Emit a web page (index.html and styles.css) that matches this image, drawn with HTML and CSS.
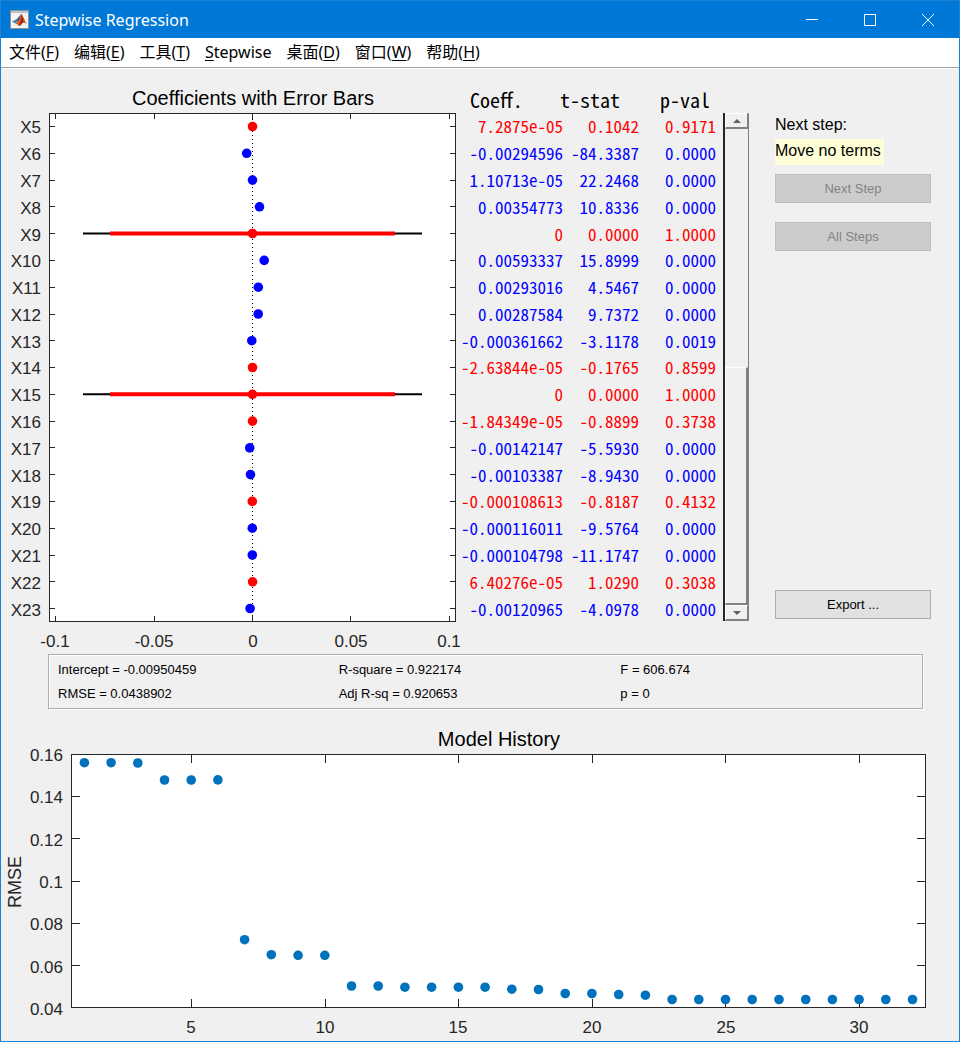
FILE: index.html
```html
<!DOCTYPE html>
<html lang="zh-CN">
<head>
<meta charset="utf-8">
<meta name="viewport" content="width=device-width, initial-scale=1">
<title>Stepwise Regression</title>
<link rel="stylesheet" href="styles.css">
</head>
<body>
<div class="window">
  <header class="titlebar">
    <svg class="logo" viewBox="0 0 19 19" aria-hidden="true">
      <rect x="0.5" y="0.5" width="18" height="18" fill="#f4f4f4" stroke="#8d9296"/>
      <rect x="1" y="1" width="17" height="2" fill="#b9c4cc"/>
      <path d="M2 11.5 6 9.5 8 11 5.500 13.500Z" fill="#3f7fb8"/>
      <path d="M6 9.500C8 9 9 6 11 4L9.500 10.500 8 11.500Z" fill="#35557f"/>
      <path d="M11 4C10.500 7 9 11 5.500 13.500 7.500 13.500 8 16 9 16 11 16 12 12.500 13.500 12.500 15 12.500 16 13.500 17 14.500 15 11 12.500 4 11 4Z" fill="#d9541e"/>
      <path d="M11 4C12 7 11 12 9 16 11 15.500 12 12.500 13.500 12.500 13 9 12 5 11 4Z" fill="#8f2415"/>
      <path d="M10.500 6C10.500 9 9.500 12 7.500 14 9 13 10.500 10 10.500 6Z" fill="#f3a43b"/>
    </svg>
    <h1 class="title">Stepwise Regression</h1>
    <div class="controls">
      <button class="control" type="button" aria-label="Minimize"><svg viewBox="0 0 12 12"><path d="M0 5.500h12"/></svg></button>
      <button class="control" type="button" aria-label="Maximize"><svg viewBox="0 0 12 12"><path d="M0.500 0.500h11v11h-11z"/></svg></button>
      <button class="control" type="button" aria-label="Close"><svg viewBox="0 0 12 12"><path d="M0 0 12 12M12 0 0 12"/></svg></button>
    </div>
  </header>

  <nav class="menubar">
    <a href="#">文件(<u>F</u>)</a>
    <a href="#">编辑(<u>E</u>)</a>
    <a href="#">工具(<u>T</u>)</a>
    <a href="#"><u>S</u>tepwise</a>
    <a href="#">桌面(<u>D</u>)</a>
    <a href="#">窗口(<u>W</u>)</a>
    <a href="#">帮助(<u>H</u>)</a>
  </nav>

  <main>
    <div class="upper">
      <svg class="plot" viewBox="1 69 457 585" role="img" aria-label="Coefficients with Error Bars">
        <text class="plot-title" x="253" y="105">Coefficients with Error Bars</text>
        <rect class="plot-area" x="49.500" y="113.500" width="406" height="508"/>
        <path class="axis" d="M55.500 114v5M154.500 114v5M252.500 114v5M350.500 114v5M449.500 114v5M55.500 621v-5M154.500 621v-5M252.500 621v-5M350.500 621v-5M449.500 621v-5"/>
        <path class="axis" d="M50 126.500h5M50 153.500h5M50 180.500h5M50 206.500h5M50 233.500h5M50 260.500h5M50 287.500h5M50 314.500h5M50 340.500h5M50 367.500h5M50 394.500h5M50 421.500h5M50 447.500h5M50 474.500h5M50 501.500h5M50 528.500h5M50 555.500h5M50 581.500h5M50 608.500h5"/>
        <path class="axis" d="M455 126.500h-5M455 153.500h-5M455 180.500h-5M455 206.500h-5M455 233.500h-5M455 260.500h-5M455 287.500h-5M455 314.500h-5M455 340.500h-5M455 367.500h-5M455 394.500h-5M455 421.500h-5M455 447.500h-5M455 474.500h-5M455 501.500h-5M455 528.500h-5M455 555.500h-5M455 581.500h-5M455 608.500h-5"/>
        <path class="zero" d="M252.500 119V616"/>
        <path class="bar-wide" d="M83 233.500H422M83 394.300H422"/>
        <path class="bar" d="M110 233.500H395M110 394.300H395"/>
        <g class="out">
          <circle cx="252.500" cy="126.500" r="4.800"/><circle cx="252.500" cy="233.500" r="4.800"/>
          <circle cx="252.500" cy="367.500" r="4.800"/><circle cx="252.500" cy="394.300" r="4.800"/>
          <circle cx="252.500" cy="421.100" r="4.800"/><circle cx="252.300" cy="501.400" r="4.800"/>
          <circle cx="252.600" cy="581.800" r="4.800"/>
        </g>
        <g class="in">
          <circle cx="246.700" cy="153.300" r="4.800"/><circle cx="252.500" cy="180.100" r="4.800"/>
          <circle cx="259.500" cy="206.800" r="4.800"/><circle cx="264.200" cy="260.400" r="4.800"/>
          <circle cx="258.300" cy="287.200" r="4.800"/><circle cx="258.200" cy="314" r="4.800"/>
          <circle cx="251.800" cy="340.700" r="4.800"/><circle cx="249.700" cy="447.900" r="4.800"/>
          <circle cx="250.500" cy="474.600" r="4.800"/><circle cx="252.300" cy="528.200" r="4.800"/>
          <circle cx="252.300" cy="555" r="4.800"/><circle cx="250.100" cy="608.500" r="4.800"/>
        </g>
        <g class="tick end">
          <text x="41" y="133">X5</text><text x="41" y="160">X6</text><text x="41" y="187">X7</text>
          <text x="41" y="214">X8</text><text x="41" y="241">X9</text><text x="41" y="267">X10</text>
          <text x="41" y="294">X11</text><text x="41" y="321">X12</text><text x="41" y="348">X13</text>
          <text x="41" y="374">X14</text><text x="41" y="401">X15</text><text x="41" y="428">X16</text>
          <text x="41" y="455">X17</text><text x="41" y="482">X18</text><text x="41" y="508">X19</text>
          <text x="41" y="535">X20</text><text x="41" y="562">X21</text><text x="41" y="589">X22</text>
          <text x="41" y="616">X23</text>
        </g>
        <g class="tick">
          <text x="55" y="647">-0.1</text><text x="154" y="647">-0.05</text><text x="253" y="647">0</text>
          <text x="351" y="647">0.05</text><text x="449" y="647">0.1</text>
        </g>
      </svg>

      <table class="terms">
        <thead>
          <tr><th scope="col">Coeff.</th><th scope="col">t-stat</th><th scope="col">p-val</th></tr>
        </thead>
        <tbody>
          <tr class="off"><td>7.2875e-05</td><td>0.1042</td><td>0.9171</td></tr>
          <tr><td>-0.00294596</td><td>-84.3387</td><td>0.0000</td></tr>
          <tr><td>1.10713e-05</td><td>22.2468</td><td>0.0000</td></tr>
          <tr><td>0.00354773</td><td>10.8336</td><td>0.0000</td></tr>
          <tr class="off"><td>0</td><td>0.0000</td><td>1.0000</td></tr>
          <tr><td>0.00593337</td><td>15.8999</td><td>0.0000</td></tr>
          <tr><td>0.00293016</td><td>4.5467</td><td>0.0000</td></tr>
          <tr><td>0.00287584</td><td>9.7372</td><td>0.0000</td></tr>
          <tr><td>-0.000361662</td><td>-3.1178</td><td>0.0019</td></tr>
          <tr class="off"><td>-2.63844e-05</td><td>-0.1765</td><td>0.8599</td></tr>
          <tr class="off"><td>0</td><td>0.0000</td><td>1.0000</td></tr>
          <tr class="off"><td>-1.84349e-05</td><td>-0.8899</td><td>0.3738</td></tr>
          <tr><td>-0.00142147</td><td>-5.5930</td><td>0.0000</td></tr>
          <tr><td>-0.00103387</td><td>-8.9430</td><td>0.0000</td></tr>
          <tr class="off"><td>-0.000108613</td><td>-0.8187</td><td>0.4132</td></tr>
          <tr><td>-0.000116011</td><td>-9.5764</td><td>0.0000</td></tr>
          <tr><td>-0.000104798</td><td>-11.1747</td><td>0.0000</td></tr>
          <tr class="off"><td>6.40276e-05</td><td>1.0290</td><td>0.3038</td></tr>
          <tr><td>-0.00120965</td><td>-4.0978</td><td>0.0000</td></tr>
        </tbody>
      </table>

      <div class="scroll">
        <button class="scroll-end" type="button" aria-label="Scroll up"><svg viewBox="0 0 8 4"><path d="M4 0 8 4H0z"/></svg></button>
        <div class="scroll-track"><div class="scroll-thumb"></div></div>
        <button class="scroll-end" type="button" aria-label="Scroll down"><svg viewBox="0 0 8 4"><path d="M0 0H8L4 4z"/></svg></button>
      </div>

      <aside class="side">
        <p class="side-label">Next step:</p>
        <p class="side-value">Move no terms</p>
        <button class="action" type="button" disabled>Next Step</button>
        <button class="action" type="button" disabled>All Steps</button>
        <button class="action export" type="button">Export ...</button>
      </aside>
    </div>

    <section class="stats">
      <span>Intercept = -0.00950459</span><span>R-square = 0.922174</span><span>F = 606.674</span>
      <span>RMSE = 0.0438902</span><span>Adj R-sq = 0.920653</span><span>p = 0</span>
    </section>

    <svg class="plot" viewBox="1 709 958 332" role="img" aria-label="Model History">
      <text class="plot-title" x="499" y="746">Model History</text>
      <rect class="plot-area" x="71.500" y="754.500" width="854" height="253"/>
      <path class="axis" d="M191.500 755v8M325.500 755v8M458.500 755v8M592.500 755v8M725.500 755v8M859.500 755v8M191.500 1007v-8M325.500 1007v-8M458.500 1007v-8M592.500 1007v-8M725.500 1007v-8M859.500 1007v-8"/>
      <path class="axis" d="M72 796.500h8M72 838.500h8M72 881.500h8M72 923.500h8M72 965.500h8M925 796.500h-8M925 838.500h-8M925 881.500h-8M925 923.500h-8M925 965.500h-8"/>
      <g class="history">
        <circle cx="84.400" cy="762.700" r="4.800"/><circle cx="111.100" cy="762.700" r="4.800"/><circle cx="137.800" cy="763" r="4.800"/>
        <circle cx="164.500" cy="780" r="4.800"/><circle cx="191.200" cy="780" r="4.800"/><circle cx="217.900" cy="779.900" r="4.800"/>
        <circle cx="244.600" cy="939.700" r="4.800"/><circle cx="271.300" cy="954.700" r="4.800"/><circle cx="298.100" cy="955.300" r="4.800"/>
        <circle cx="324.800" cy="955.300" r="4.800"/><circle cx="351.500" cy="986" r="4.800"/><circle cx="378.200" cy="986" r="4.800"/>
        <circle cx="404.900" cy="987.200" r="4.800"/><circle cx="431.600" cy="987.200" r="4.800"/><circle cx="458.400" cy="987.200" r="4.800"/>
        <circle cx="485.100" cy="987.200" r="4.800"/><circle cx="511.800" cy="989.200" r="4.800"/><circle cx="538.500" cy="989.500" r="4.800"/>
        <circle cx="565.200" cy="993.500" r="4.800"/><circle cx="591.900" cy="993.500" r="4.800"/><circle cx="618.700" cy="994.500" r="4.800"/>
        <circle cx="645.400" cy="995.200" r="4.800"/><circle cx="672.100" cy="999.500" r="4.800"/><circle cx="698.800" cy="999.500" r="4.800"/>
        <circle cx="725.500" cy="999.500" r="4.800"/><circle cx="752.200" cy="999.500" r="4.800"/><circle cx="779" cy="999.500" r="4.800"/>
        <circle cx="805.700" cy="999.500" r="4.800"/><circle cx="832.400" cy="999.500" r="4.800"/><circle cx="859.100" cy="999.500" r="4.800"/>
        <circle cx="885.800" cy="999.500" r="4.800"/><circle cx="912.500" cy="999.500" r="4.800"/>
      </g>
      <g class="tick end">
        <text x="63" y="761">0.16</text><text x="63" y="803">0.14</text><text x="63" y="846">0.12</text>
        <text x="63" y="888">0.1</text><text x="63" y="930">0.08</text><text x="63" y="973">0.06</text>
        <text x="63" y="1015">0.04</text>
      </g>
      <g class="tick">
        <text x="191" y="1033">5</text><text x="325" y="1033">10</text><text x="458" y="1033">15</text>
        <text x="592" y="1033">20</text><text x="726" y="1033">25</text><text x="859" y="1033">30</text>
      </g>
      <text class="axis-name" transform="translate(21 882) rotate(-90)">RMSE</text>
    </svg>
  </main>
</div>
</body>
</html>
```

FILE: styles.css
```css
* { box-sizing: border-box; }

body {
  margin: 0;
  background: #f0f0f0;
  color: #000;
  font-family: "Liberation Sans", "Noto Sans CJK SC", sans-serif;
  font-size: 13px;
}

button { font: inherit; }

.window {
  min-height: 100vh;
  border: 1px solid #1883d7;
}

/* Title bar */
.titlebar {
  display: flex;
  align-items: center;
  height: 37px;
  padding: 0 2px 0 9px;
  background: #0078d7;
  color: #fff;
}

.logo { width: 19px; height: 19px; margin-right: 6px; }

.title {
  margin: 0;
  font: 400 16px "Noto Sans", "Noto Sans CJK SC", sans-serif;
}

.controls { display: flex; margin-left: auto; }

.control {
  display: grid;
  place-items: center;
  width: 58px;
  height: 36px;
  padding: 0;
  border: 0;
  background: none;
}

.control svg {
  width: 12px;
  height: 12px;
  fill: none;
  stroke: #fff;
}

/* Menu bar */
.menubar {
  display: flex;
  gap: 15px;
  height: 30px;
  padding-left: 8px;
  border-bottom: 1px solid #a0a0a0;
  background: #fff;
  font: 16px/29px "Noto Sans", "Noto Sans CJK SC", sans-serif;
}

.menubar a { color: #000; text-decoration: none; }
.menubar u { text-underline-offset: 2px; }

/* Plots */
.upper {
  display: grid;
  grid-template-columns: minmax(0, 457fr) 265px 26px minmax(0, 210fr);
  border-top: 1px solid #fff;
}

.plot { display: block; width: 100%; overflow: visible; }

.plot text {
  fill: #262626;
  text-anchor: middle;
  font-size: 17px;
}

.plot .plot-title { fill: #000; font-size: 20px; }
.plot .axis-name { font-size: 18px; }
.plot .end text { text-anchor: end; }

.plot-area {
  fill: #fff;
  stroke: #262626;
  shape-rendering: crispEdges;
}

.axis { stroke: #262626; shape-rendering: crispEdges; }

.zero {
  stroke: #000;
  stroke-dasharray: 1 3;
  shape-rendering: crispEdges;
}

.bar-wide { stroke: #000; stroke-width: 2; }
.bar { stroke: #f00; stroke-width: 4; }
.out { fill: #f00; }
.in { fill: #00f; }
.history { fill: #0072bd; }

/* Term table */
.terms {
  display: block;
  padding-top: 17px;
  font-family: "Noto Sans CJK SC", "Liberation Mono", monospace;
  font-feature-settings: "hwid";
}

.terms thead { display: block; height: 27px; }

.terms thead tr {
  display: grid;
  grid-template-columns: 90px 100px 60px;
  padding-left: 12px;
}

.terms th {
  padding: 0;
  text-align: left;
  font-size: 20px;
  font-weight: 400;
  line-height: 28px;
}

.terms tbody {
  display: grid;
  grid-template-rows: repeat(19, 1fr);
  height: 509px;
}

.terms tbody tr {
  display: grid;
  grid-template-columns: 105px 76px 77px;
  align-items: center;
  color: #00f;
}

.terms tbody tr.off { color: #f00; }

.terms td {
  padding: 0;
  text-align: right;
  font-size: 17px;
  line-height: 24px;
}

/* Scroll bar */
.scroll {
  display: flex;
  flex-direction: column;
  height: 508px;
  margin-top: 44px;
  border: solid #262626;
  border-width: 0 1px 0 2px;
  border-right-color: #808080;
}

.scroll-end {
  display: grid;
  place-items: center;
  flex: none;
  height: 16px;
  padding: 0;
  border: solid;
  border-width: 1px 1px 2px;
  border-color: #fff #808080 #808080 #fff;
  background: #f0f0f0;
}

.scroll-end svg { width: 8px; height: 4px; fill: #606060; }

.scroll-track {
  display: flex;
  flex: 1;
  align-items: flex-end;
}

.scroll-thumb {
  width: 100%;
  height: 50%;
  border: solid;
  border-width: 1px 2px 2px 1px;
  border-color: #fff #808080 #808080 #fff;
}

/* Side column */
.side {
  display: flex;
  flex-direction: column;
  align-items: flex-start;
  padding: 46px 28px 35px 26px;
}

.side p { margin: 0; font-size: 16px; }
.side-label { line-height: 20px; }

.side .side-value {
  margin: 4px 0 9px;
  padding: 0 3px 2px 0;
  background: #ffffd7;
  line-height: 24px;
}

.action {
  width: 100%;
  height: 29px;
  margin-bottom: 19px;
  border: 1px solid #adadad;
  background: #e1e1e1;
  color: #000;
}

.action:disabled {
  border-color: #bfbfbf;
  background: #ccc;
  color: #838383;
}

.action.export { margin: auto 0 0; }

/* Fit statistics */
.stats {
  display: grid;
  grid-template-columns: 281fr 282fr 302fr;
  margin: 0 36px 0 47px;
  padding: 3px 0 2px 9px;
  border: 1px solid #adadad;
  box-shadow: 1px 1px #fff, inset 1px 1px #fff;
  line-height: 24px;
}
```
